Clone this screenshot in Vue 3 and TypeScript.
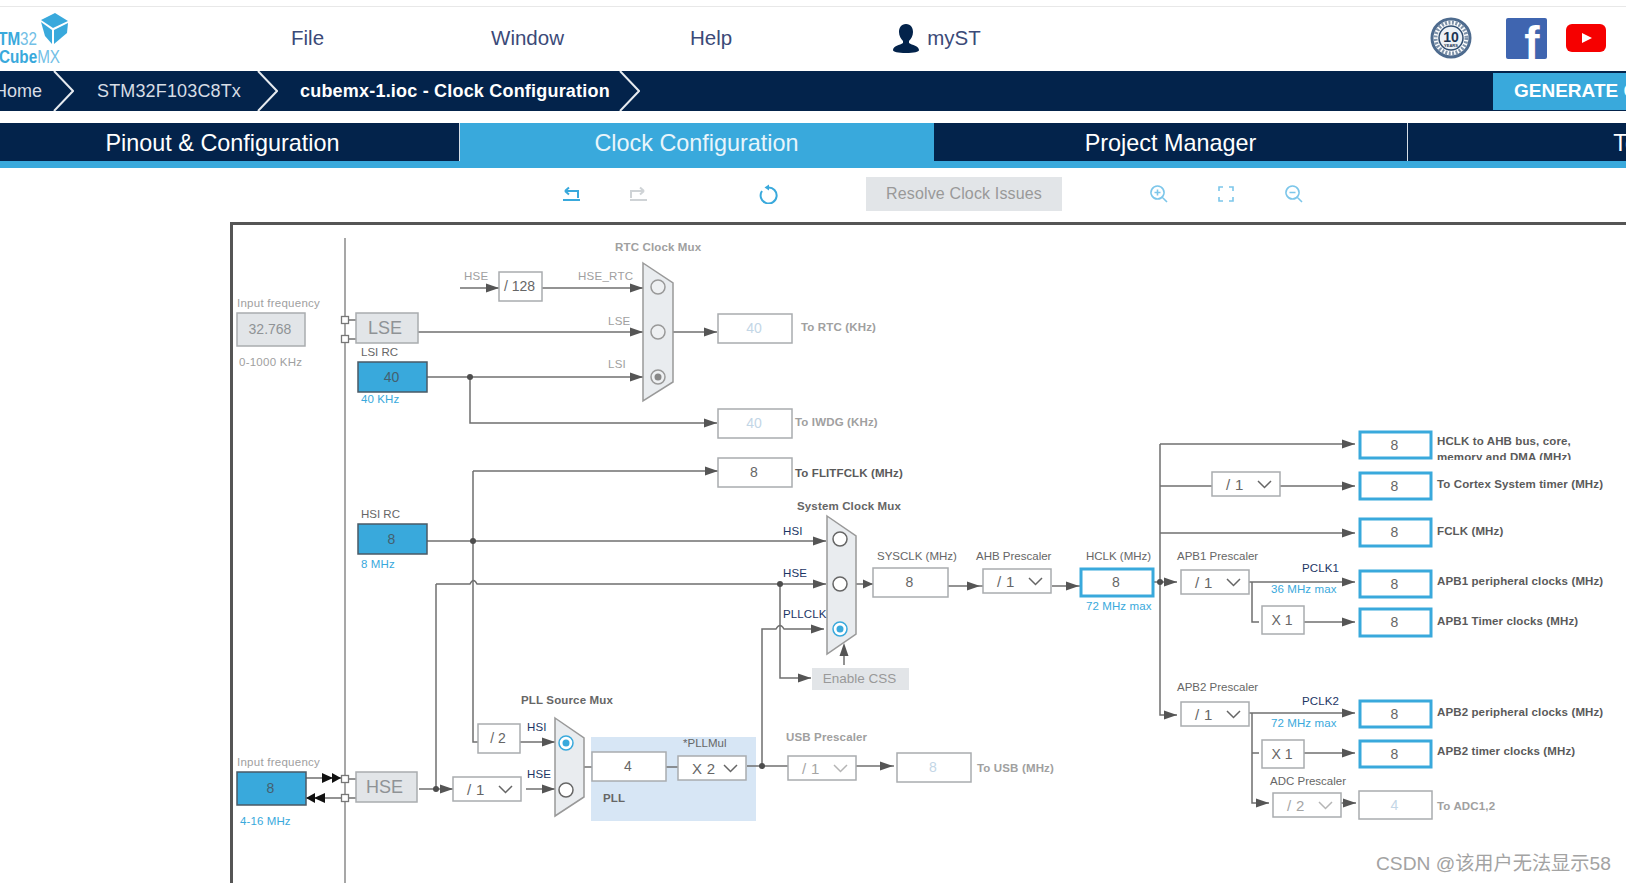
<template>
  <div class="page">
    <header class="topbar">
      <svg class="logo" width="72" height="60" viewBox="0 0 72 60">
        <path d="M41 13 55 6 68 14 53 21Z" fill="#39a9dc" />
        <path d="M41 15 52 23V37L45 29Z" fill="#39a9dc" />
        <path d="M54 23 68 16 67 26 54 37Z" fill="#39a9dc" />
        <text x="-12" y="38" class="logo-txt" textLength="49" lengthAdjust="spacingAndGlyphs"><tspan font-weight="700">STM</tspan><tspan class="logo-thin">32</tspan></text>
        <text x="-1" y="56" class="logo-txt" textLength="61" lengthAdjust="spacingAndGlyphs"><tspan font-weight="700">Cube</tspan><tspan class="logo-thin">MX</tspan></text>
      </svg>
      <nav class="menu">
        <span class="menu-file">File</span>
        <span class="menu-window">Window</span>
        <span class="menu-help">Help</span>
        <span class="menu-myst">
          <svg width="28" height="30" viewBox="0 0 28 30">
            <path d="M14 1c5 0 7 4 7 8 0 4-2 7-4 9v2c3 2 10 3 10 7 0 2-5 3-13 3S1 29 1 27c0-4 7-5 10-7v-2C9 16 7 13 7 9c0-4 2-8 7-8Z" fill="#03234b" />
          </svg>
          myST
        </span>
      </nav>
      <div class="social">
        <svg width="42" height="42" viewBox="0 0 42 42">
          <circle cx="21" cy="21" r="19" fill="#fff" stroke="#4e6b8e" stroke-width="3" />
          <circle cx="21" cy="21" r="15.500" fill="none" stroke="#7f93aa" stroke-width="4" stroke-dasharray="2 1.500" />
          <circle cx="21" cy="21" r="12" fill="#eef2f6" stroke="#2f4d70" stroke-width="1.500" />
          <text x="21" y="25" text-anchor="middle" class="badge-num">10</text>
          <text x="21" y="30" text-anchor="middle" class="badge-sub">YEARS</text>
        </svg>
        <svg class="fb" width="41" height="41" viewBox="0 0 41 41">
          <rect width="41" height="41" rx="2" fill="#3f65b0" />
          <text x="26" y="41" text-anchor="middle" class="fb-f">f</text>
        </svg>
        <svg class="yt" width="40" height="28" viewBox="0 0 40 28">
          <rect width="40" height="28" rx="6" fill="#f60000" />
          <path d="M16 9 26 14 16 19Z" fill="#fff" />
        </svg>
      </div>
    </header>

    <div class="crumbs">
      <span class="crumb crumb-home">Home</span>
      <svg class="chev" width="21" height="40" viewBox="0 0 21 40"><path d="M1 0 20 20 1 40" /></svg>
      <span class="crumb">STM32F103C8Tx</span>
      <svg class="chev" width="21" height="40" viewBox="0 0 21 40"><path d="M1 0 20 20 1 40" /></svg>
      <span class="crumb crumb-current">cubemx-1.ioc - Clock Configuration</span>
      <svg class="chev" width="21" height="40" viewBox="0 0 21 40"><path d="M1 0 20 20 1 40" /></svg>
      <button class="generate">GENERATE CODE</button>
    </div>

    <div class="tabs">
      <div v-for="t in tabs" :key="t" class="tab" :class="{ active: t === 'Clock Configuration', tools: t === 'Tools' }">{{ t }}</div>
    </div>
    <div class="strip"></div>

    <div class="toolbar">
      <svg class="t-undo" width="20" height="20" viewBox="0 0 20 20">
        <path d="M4 7H17V14M4 7 8 3.500M4 7 8 10.500M2 16H19" class="ic-blue" />
      </svg>
      <svg class="t-redo" width="20" height="20" viewBox="0 0 20 20">
        <path d="M16 7H3V14M16 7 12 3.500M16 7 12 10.500M2 16H19" class="ic-gray" />
      </svg>
      <svg class="t-refresh" width="20" height="20" viewBox="0 0 20 20">
        <path d="M9 3.500A8 8 0 1 1 3 7" class="ic-blue" />
        <path d="M10 0.500 5.500 3.500 10 6.500Z" fill="#39a9dc" />
      </svg>
      <button class="resolve">Resolve Clock Issues</button>
      <svg class="t-zoom" width="20" height="20" viewBox="0 0 20 20">
        <path d="M8.500 2a6.500 6.500 0 1 0 .01 0ZM13 13 18 18M8.500 5.500v6M5.500 8.500h6" class="ic-pale" />
      </svg>
      <svg class="t-fit" width="20" height="20" viewBox="0 0 20 20">
        <path d="M7 3H3V7M13 3H17V7M7 17H3V13M13 17H17V13" class="ic-pale" />
      </svg>
      <svg class="t-out" width="20" height="20" viewBox="0 0 20 20">
        <path d="M8.500 2a6.500 6.500 0 1 0 .01 0ZM13 13 18 18M5.500 8.500h6" class="ic-pale" />
      </svg>
    </div>

    <section class="canvas">
      <svg class="diagram" width="1393" height="658" viewBox="233 225 1393 658">
        <defs>
          <clipPath id="hclk-clip"><rect x="1434" y="430" width="180" height="30" /></clipPath>
        </defs>

        <rect x="591" y="737" width="165" height="84" fill="#d7e6f5" />

        <path v-for="(d, i) in wires" :key="'w' + i" :d="d" class="wire" />
        <path d="M345 238V883" class="rail" />

        <polygon v-for="(p, i) in arrowPoints" :key="'a' + i" :points="p" class="arrow" />
        <polygon v-for="(p, i) in blackArrowPoints" :key="'b' + i" :points="p" fill="#111" />
        <circle v-for="(c, i) in dots" :key="'d' + i" :cx="c[0]" :cy="c[1]" r="3" class="dot" />

        <rect v-for="(s, i) in pins" :key="'p' + i" :x="s[0] - 3.500" :y="s[1] - 3.500" width="7" height="7" class="pin" />

        <g v-for="(m, i) in muxes" :key="'m' + i">
          <polygon :points="m.points" class="mux" />
          <g v-for="(r, j) in m.radios" :key="j">
            <circle :cx="r[0]" :cy="r[1]" r="7" class="radio" :class="{ on: j === m.on, faded: m.faded }" />
            <circle v-if="j === m.on" :cx="r[0]" :cy="r[1]" r="3.500" class="radio-dot" :class="{ faded: m.faded }" />
          </g>
        </g>

        <g v-for="(b, i) in boxes" :key="'x' + i">
          <rect :x="b.x" :y="b.y" :width="b.w" :height="b.h" class="box" :class="b.kind" />
          <text :x="b.x + b.w / 2" :y="b.y + b.h / 2 - 0.5" class="box-txt" :class="[b.kind, { big: b.text === 'LSE' || b.text === 'HSE' }]">{{ b.text }}</text>
        </g>

        <g v-for="(s, i) in selects" :key="'s' + i" :class="{ off: s.off }">
          <rect :x="s.x" :y="s.y" width="68" height="24" class="box plain" />
          <text :x="s.x + 14" :y="s.y + 12" class="sel-txt">{{ s.text }}</text>
          <path :d="`M${s.x + 46} ${s.y + 9}l6.500 6.500 6.500-6.500`" class="sel-chev" />
        </g>

        <text v-for="(l, i) in labels" :key="'l' + i" :x="l[0]" :y="l[1]" class="lbl" :class="l[3]">{{ l[2] }}</text>
        <text x="1437" y="441" class="lbl out">HCLK to AHB bus, core,</text>
        <text x="1437" y="457" class="lbl out" clip-path="url(#hclk-clip)">memory and DMA (MHz)</text>

        <text x="1376" y="863" class="mark">CSDN @该用户无法显示58</text>
      </svg>
    </section>
  </div>
</template>

<script setup lang="ts">
type Dir = "r" | "l" | "u";
type Kind = "plain" | "gray" | "src" | "outb" | "off" | "flat";

interface Box {
  x: number;
  y: number;
  w: number;
  h: number;
  text: string;
  kind: Kind;
}

const tabs = ["Pinout & Configuration", "Clock Configuration", "Project Manager", "Tools"];

function arrow(x: number, y: number, dir: Dir = "r", len = 13, half = 4.5): string {
  if (dir === "r") return `${x},${y} ${x - len},${y - half} ${x - len},${y + half}`;
  if (dir === "l") return `${x},${y} ${x + len},${y - half} ${x + len},${y + half}`;
  return `${x},${y} ${x - half},${y + len} ${x + half},${y + len}`;
}

const wires = [
  "M460 288H499",
  "M542 288H643",
  "M418 332H643",
  "M427 377H643",
  "M470 377V423H717",
  "M673 332H717",
  "M473 471H718",
  "M473 471V742H478",
  "M427 541H826",
  "M436 584H470q3.500-7 7 0H826",
  "M436 584V789",
  "M419 789H453",
  "M520 742H555",
  "M526 789H555",
  "M584 767H592",
  "M666 767H678",
  "M747 766H788",
  "M762 766V629H776q4-7 8 0H824",
  "M780 584V678H811",
  "M844 665V650",
  "M856 584H873",
  "M948 586H983",
  "M1052 586H1080",
  "M1154 582H1177",
  "M1160 444V715H1177",
  "M1160 444H1355",
  "M1160 486H1212",
  "M1280 486H1355",
  "M1160 533H1355",
  "M1249 582H1355",
  "M1252 582V622H1259",
  "M1304 622H1355",
  "M1249 713H1355",
  "M1252 713V803H1269",
  "M1252 753H1259",
  "M1304 753H1355",
  "M1341 803H1356",
  "M856 766H894",
  "M306 778H341",
  "M306 798H341",
  "M348 320H356",
  "M348 339H356",
  "M348 779H356",
  "M348 798H356",
];

const arrowPoints = [
  arrow(499, 288), arrow(643, 288), arrow(643, 332), arrow(643, 377),
  arrow(717, 332), arrow(717, 423), arrow(718, 471),
  arrow(826, 541), arrow(826, 584), arrow(824, 629), arrow(811, 678),
  arrow(844, 643, "u"),
  arrow(555, 742), arrow(555, 789), arrow(453, 789),
  arrow(873, 584, "r", 10), arrow(980, 586), arrow(1079, 586), arrow(1177, 582),
  arrow(1177, 715), arrow(1355, 444), arrow(1355, 486), arrow(1355, 533),
  arrow(1355, 582), arrow(1355, 622), arrow(1355, 713), arrow(1355, 753),
  arrow(1269, 803), arrow(1356, 803), arrow(893, 766),
];

const blackArrowPoints = [
  arrow(333, 778, "r", 11, 5), arrow(341, 778, "r", 9, 5),
  arrow(306, 798, "l", 9, 5), arrow(314, 798, "l", 11, 5),
];

const dots: number[][] = [
  [470, 377], [473, 541], [780, 584], [436, 789], [762, 766], [1160, 582],
];

const pins: number[][] = [[345, 320], [345, 339], [345, 779], [345, 798]];

const muxes = [
  {
    points: "643,263 673,283 673,382 643,401",
    radios: [[658, 287], [658, 332], [658, 377]],
    on: 2,
    faded: true,
  },
  {
    points: "827,516 856,536 856,634 827,654",
    radios: [[840, 539], [840, 584], [840, 629]],
    on: 2,
    faded: false,
  },
  {
    points: "555,718 584,738 584,797 555,816",
    radios: [[566, 743], [566, 790]],
    on: 0,
    faded: false,
  },
];

const outX = 1360;
const boxes: Box[] = [
  { x: 237, y: 313, w: 68, h: 33, text: "32.768", kind: "gray" },
  { x: 356, y: 313, w: 62, h: 30, text: "LSE", kind: "gray" },
  { x: 358, y: 362, w: 69, h: 30, text: "40", kind: "src" },
  { x: 358, y: 524, w: 69, h: 30, text: "8", kind: "src" },
  { x: 237, y: 772, w: 69, h: 33, text: "8", kind: "src" },
  { x: 356, y: 772, w: 61, h: 30, text: "HSE", kind: "gray" },
  { x: 499, y: 272, w: 43, h: 29, text: "/ 128", kind: "plain" },
  { x: 478, y: 724, w: 42, h: 29, text: "/ 2", kind: "plain" },
  { x: 592, y: 752, w: 74, h: 29, text: "4", kind: "plain" },
  { x: 718, y: 314, w: 74, h: 29, text: "40", kind: "off" },
  { x: 718, y: 409, w: 74, h: 29, text: "40", kind: "off" },
  { x: 718, y: 458, w: 74, h: 29, text: "8", kind: "plain" },
  { x: 873, y: 568, w: 75, h: 29, text: "8", kind: "plain" },
  { x: 1081, y: 569, w: 72, h: 27, text: "8", kind: "outb" },
  { x: 897, y: 753, w: 74, h: 29, text: "8", kind: "off" },
  { x: 812, y: 668, w: 97, h: 22, text: "Enable CSS", kind: "flat" },
  { x: outX, y: 432, w: 71, h: 26, text: "8", kind: "outb" },
  { x: outX, y: 473, w: 71, h: 26, text: "8", kind: "outb" },
  { x: outX, y: 519, w: 71, h: 27, text: "8", kind: "outb" },
  { x: outX, y: 571, w: 71, h: 26, text: "8", kind: "outb" },
  { x: outX, y: 609, w: 71, h: 27, text: "8", kind: "outb" },
  { x: outX, y: 701, w: 71, h: 26, text: "8", kind: "outb" },
  { x: outX, y: 741, w: 71, h: 26, text: "8", kind: "outb" },
  { x: 1262, y: 606, w: 42, h: 28, text: "X 1", kind: "plain" },
  { x: 1262, y: 740, w: 42, h: 28, text: "X 1", kind: "plain" },
  { x: 1359, y: 791, w: 73, h: 28, text: "4", kind: "off" },
];

const selects = [
  { x: 453, y: 777, text: "/ 1", off: false },
  { x: 678, y: 756, text: "X 2", off: false },
  { x: 788, y: 756, text: "/ 1", off: true },
  { x: 983, y: 569, text: "/ 1", off: false },
  { x: 1212, y: 472, text: "/ 1", off: false },
  { x: 1181, y: 570, text: "/ 1", off: false },
  { x: 1181, y: 702, text: "/ 1", off: false },
  { x: 1273, y: 793, text: "/ 2", off: true },
];

// x, y (text middle), text, style
const labels: [number, number, string, string][] = [
  [615, 247, "RTC Clock Mux", "dim bold"],
  [464, 276, "HSE", "dim"],
  [578, 276, "HSE_RTC", "dim"],
  [608, 321, "LSE", "dim"],
  [608, 364, "LSI", "dim"],
  [237, 303, "Input frequency", "dim"],
  [239, 362, "0-1000 KHz", "dim"],
  [361, 352, "LSI RC", "dark"],
  [361, 399, "40 KHz", "blue"],
  [361, 514, "HSI RC", "dark"],
  [361, 564, "8 MHz", "blue"],
  [237, 762, "Input frequency", "dim"],
  [240, 821, "4-16 MHz", "blue"],
  [521, 700, "PLL Source Mux", "dark bold"],
  [527, 727, "HSI", "navy"],
  [527, 774, "HSE", "navy"],
  [683, 743, "*PLLMul", "dark"],
  [603, 798, "PLL", "dark bold"],
  [797, 506, "System Clock Mux", "dark bold"],
  [783, 531, "HSI", "navy"],
  [783, 573, "HSE", "navy"],
  [783, 614, "PLLCLK", "navy"],
  [877, 556, "SYSCLK (MHz)", "dark"],
  [976, 556, "AHB Prescaler", "dark"],
  [1086, 556, "HCLK (MHz)", "dark"],
  [1086, 606, "72 MHz max", "blue"],
  [786, 737, "USB Prescaler", "dim bold"],
  [977, 768, "To USB (MHz)", "dim bold"],
  [801, 327, "To RTC (KHz)", "dim bold"],
  [795, 422, "To IWDG (KHz)", "dim bold"],
  [795, 473, "To FLITFCLK (MHz)", "out"],
  [1177, 556, "APB1 Prescaler", "dark"],
  [1177, 687, "APB2 Prescaler", "dark"],
  [1270, 781, "ADC Prescaler", "dark"],
  [1302, 568, "PCLK1", "navy"],
  [1302, 701, "PCLK2", "navy"],
  [1271, 589, "36 MHz max", "blue"],
  [1271, 723, "72 MHz max", "blue"],
  [1437, 484, "To Cortex System timer (MHz)", "out"],
  [1437, 531, "FCLK (MHz)", "out"],
  [1437, 581, "APB1 peripheral clocks (MHz)", "out"],
  [1437, 621, "APB1 Timer clocks (MHz)", "out"],
  [1437, 712, "APB2 peripheral clocks (MHz)", "out"],
  [1437, 751, "APB2 timer clocks (MHz)", "out"],
  [1437, 806, "To ADC1,2", "dim bold"],
];
</script>

<style>
html,
body {
  margin: 0;
  overflow: hidden;
  background: #fff;
}
</style>

<style scoped>
.page {
  width: 1626px;
  height: 883px;
  overflow: hidden;
  display: flex;
  flex-direction: column;
  background: #fff;
  font-family: "Liberation Sans", Arial, sans-serif;
}

.topbar {
  flex: none;
  height: 64px;
  margin-top: 6px;
  border-top: 1px solid #e8e8e8;
  display: flex;
  align-items: center;
}

.logo {
  flex: none;
  display: block;
  align-self: flex-start;
}

.logo-txt {
  fill: #39a9dc;
  font-size: 18px;
  font-weight: 400;
}

.logo-thin {
  fill: #72c0e6;
}

.menu {
  display: flex;
  align-items: center;
  color: #3b4a78;
  font-size: 20.500px;
  margin-left: 219px;
  margin-top: -2px;
}

.menu-window {
  margin-left: 167px;
}

.menu-help {
  margin-left: 126px;
}

.menu-myst {
  display: flex;
  align-items: center;
  gap: 7px;
  margin-left: 160px;
}

.social {
  display: flex;
  align-items: center;
  margin-left: auto;
  margin-right: 20px;
  margin-top: -2px;
}

.fb {
  margin-left: 34px;
}

.yt {
  margin-left: 19px;
}

.badge-num {
  font-size: 14px;
  font-weight: 700;
  fill: #1d3553;
}

.badge-sub {
  font-size: 4px;
  font-weight: 700;
  fill: #1d3553;
}

.fb-f {
  font-size: 46px;
  font-weight: 700;
  fill: #fff;
}

.crumbs {
  flex: none;
  height: 40px;
  background: #03234b;
  display: flex;
  align-items: center;
  margin-left: -6px;
}

.crumb {
  color: #d7dde5;
  font-size: 18px;
  letter-spacing: 0.15px;
  white-space: nowrap;
  margin: 0 16px 0 23px;
}

.crumb-home {
  margin-left: 0;
  margin-right: 11px;
  letter-spacing: 0;
}

.crumb-current {
  color: #fff;
  font-weight: 700;
  letter-spacing: 0.2px;
  margin-left: 22px;
  margin-right: 9px;
}

.chev {
  flex: none;
  display: block;
}

.chev path {
  fill: none;
  stroke: #e6eaef;
  stroke-width: 2;
}

.generate {
  margin-left: auto;
  margin-right: -30px;
  width: 163px;
  height: 37px;
  flex: none;
  border: 0;
  padding: 0 0 0 21px;
  text-align: left;
  white-space: nowrap;
  overflow: hidden;
  background: #39a9dc;
  color: #fff;
  font: 700 19px "Liberation Sans", Arial, sans-serif;
}

.tabs {
  flex: none;
  height: 38px;
  margin-top: 12px;
  margin-left: -14px;
  display: flex;
  width: 1800px;
}

.tab {
  width: 474px;
  flex: none;
  box-sizing: border-box;
  background: #03234b;
  border-right: 1px solid #d5dde6;
  color: #fff;
  font-size: 23.400px;
  padding-top: 2px;
  display: flex;
  align-items: center;
  justify-content: center;
}

.tab.active {
  background: #39a9dc;
  border-right-color: #39a9dc;
  color: #e8f5fb;
}

.tab.tools {
  padding-right: 8px;
}

.strip {
  flex: none;
  height: 7px;
  background: #39a9dc;
}

.toolbar {
  flex: none;
  height: 52px;
  margin-bottom: 2px;
  display: flex;
  align-items: center;
  padding-left: 561px;
}

.t-redo {
  margin-left: 47px;
}

.t-refresh {
  margin-left: 111px;
}

.resolve {
  margin-left: 87px;
  width: 196px;
  height: 34px;
  border: 0;
  background: #e2e5e8;
  color: #999;
  font: 16px "Liberation Sans", Arial, sans-serif;
  letter-spacing: 0.15px;
  white-space: nowrap;
  padding: 0;
}

.t-zoom {
  margin-left: 87px;
}

.t-fit {
  margin-left: 47px;
}

.t-out {
  margin-left: 48px;
}

.ic-blue,
.ic-gray,
.ic-pale {
  fill: none;
  stroke-width: 2;
}

.ic-blue {
  stroke: #39a9dc;
}

.ic-gray {
  stroke: #cfd3d6;
}

.ic-pale {
  stroke: #7cc6ea;
  stroke-width: 1.600;
}

.canvas {
  flex: 1;
  min-height: 0;
  margin-left: 230px;
  border-top: 3px solid #555;
  border-left: 3px solid #555;
  overflow: hidden;
}

.diagram {
  display: block;
  font-family: "Liberation Sans", Arial, sans-serif;
}

.wire {
  fill: none;
  stroke: #6f6f6f;
  stroke-width: 1.500;
}

.rail {
  fill: none;
  stroke: #8a8a8a;
  stroke-width: 1.500;
}

.arrow {
  fill: #555;
}

.dot {
  fill: #4d4d4d;
}

.pin {
  fill: #fff;
  stroke: #777;
  stroke-width: 1.300;
}

.mux {
  fill: #e9ecef;
  stroke: #999;
  stroke-width: 1.500;
}

.radio {
  fill: #fff;
  stroke: #666;
  stroke-width: 1.500;
}

.radio.faded {
  fill: #eef0f2;
  stroke: #999;
}

.radio.on {
  stroke: #39a9dc;
}

.radio.on.faded {
  stroke: #999;
}

.radio-dot {
  fill: #39a9dc;
}

.radio-dot.faded {
  fill: #888;
}

.box {
  fill: #fff;
  stroke: #a9acaf;
  stroke-width: 1.500;
}

.box.gray {
  fill: #e2e5e8;
}

.box.flat {
  fill: #e2e5e8;
  stroke: none;
}

.box.src {
  fill: #39a9dc;
  stroke: #4a5a66;
}

.box.outb {
  stroke: #39a9dc;
  stroke-width: 3;
}

.box-txt {
  font-size: 14px;
  fill: #666;
  text-anchor: middle;
  dominant-baseline: central;
  transform: translateX(-1px);
}

.box-txt.big {
  font-size: 18px;
  transform: translateX(-2px);
}

.box-txt.gray {
  fill: #8f9396;
}

.box-txt.flat {
  fill: #999;
  font-size: 13.500px;
}

.box-txt.src {
  fill: #44606f;
}

.box-txt.off {
  fill: #c3d6e6;
}

.sel-txt {
  font-size: 15px;
  fill: #666;
  letter-spacing: 0.3px;
  dominant-baseline: central;
}

.sel-chev {
  fill: none;
  stroke: #666;
  stroke-width: 1.500;
}

.off .sel-txt {
  fill: #a5a5a5;
}

.off .sel-chev {
  stroke: #b5b5b5;
}

.lbl {
  font-size: 11.500px;
  letter-spacing: 0.1px;
  dominant-baseline: central;
  white-space: pre;
}

.lbl.dim {
  fill: #a0a0a0;
  letter-spacing: 0.25px;
}

.lbl.dark {
  fill: #666;
  letter-spacing: 0;
}

.lbl.navy {
  fill: #1c3564;
}

.lbl.blue {
  fill: #39a9dc;
}

.lbl.bold {
  font-weight: 700;
  letter-spacing: 0.15px;
}

.lbl.out {
  fill: #5a5a5a;
  font-weight: 700;
  letter-spacing: 0.12px;
}

.mark {
  font-family: "Liberation Sans", "Noto Sans CJK SC", sans-serif;
  font-size: 19.200px;
  fill: #a3a3a3;
  dominant-baseline: central;
}
</style>
